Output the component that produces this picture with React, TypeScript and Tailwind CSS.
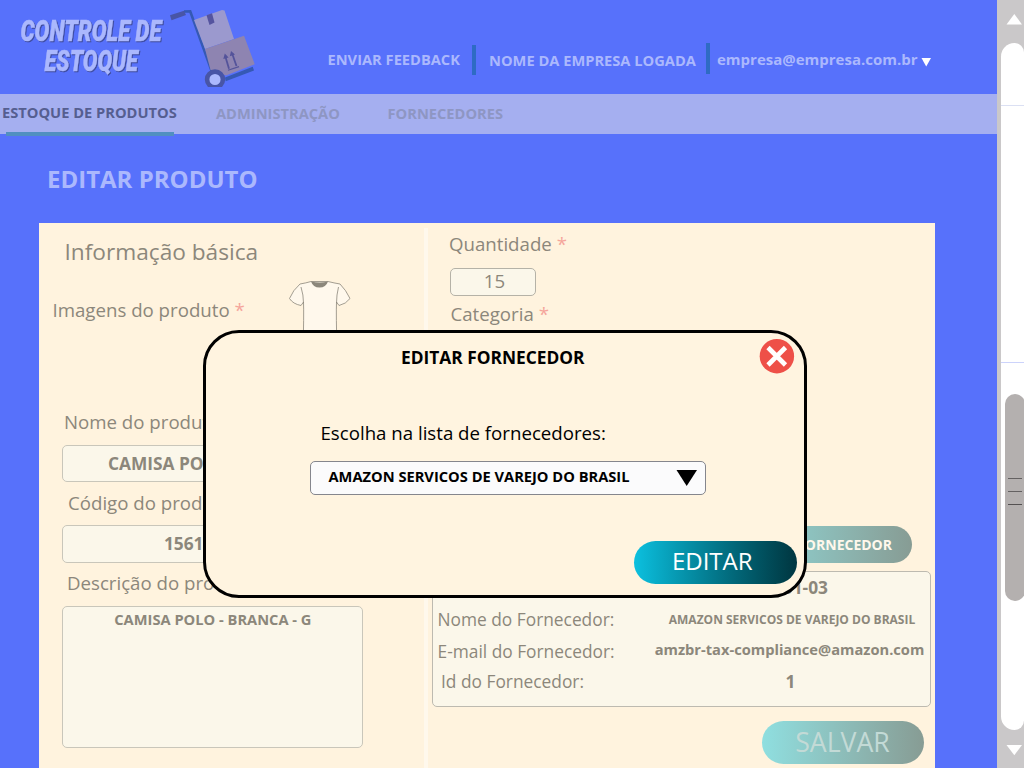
import type { ReactNode } from "react";

function Logo() {
  return (
    <svg width="280" height="94" viewBox="0 0 280 94" className="shrink-0">
      <g
        className="[filter:drop-shadow(1.4px_1.6px_0_#3d4a9c)]"
        fontFamily="Roboto, 'Liberation Sans', sans-serif"
        fontWeight="900"
        fontStyle="italic"
        fontSize="30"
        strokeWidth="0.5"
        fill="#abb8fd"
        stroke="#abb8fd"
      >
        <text x="20.500" y="40.500" textLength="141" lengthAdjust="spacingAndGlyphs">CONTROLE DE</text>
        <text x="44.500" y="71.300" textLength="93.500" lengthAdjust="spacingAndGlyphs">ESTOQUE</text>
      </g>
      <path d="M225 77.500 L252.700 66.700 L254 70.500 L225.700 81.300Z" fill="#3559b4" />
      <path d="M184 11.500 L190.200 11.300 L212 72" fill="none" stroke="#3559b4" strokeWidth="2.600" />
      <path d="M170 15.300 L184 10.700 L186 15 L171.500 20.200Z" fill="#4855a6" />
      <path d="M194 20 L222 10 L224.500 10.500 L234 39 L205 49Z" fill="#9b99ce" />
      <path d="M205 49 L244 35.700 L254.700 64.300 L226 75.500 L210.500 70Z" fill="#8e84b1" />
      <path d="M206.500 15.300 L212 13.300 L214.500 22.500 L209.500 25Z" fill="#55549f" />
      <g stroke="#54539a" strokeWidth="1.8" fill="none">
        <path d="M229 68.800 L225.500 57" />
        <path d="M236.500 66 L232.300 54" />
        <path d="M228 70.300 L239 66.600" strokeWidth="1.200" />
      </g>
      <path d="M223.300 59 L224.800 53.500 L228.600 57.400Z M229.800 56.300 L231 51 L235 54.600Z" fill="#54539a" />
      <circle cx="215" cy="79.500" r="7.900" fill="#abb8fd" stroke="#4855a6" strokeWidth="4.600" />
      <path d="M200 87 H230 V94 H200Z" fill="#5771fb" />
    </svg>
  );
}

function Shirt() {
  return (
    <svg width="64" height="70" viewBox="0 0 64 70">
      <path
        d="M12 4 Q18 3 23 1.500 H40 Q46 3 52 4 Q58 10 62 18.500 Q58 24 51 25.500 L48.500 22 Q48 35 49 70 H15 Q16 35 15.500 22 L13 25.500 Q5 24 1.500 18.500 Q5 10 12 4Z"
        fill="#fff8ec"
        stroke="#8c877b"
        strokeWidth="0.8"
      />
      <path d="M23 1.500 Q32 3.500 40 1.500 Q38 7.500 31.500 7.500 Q25 7.500 23 1.500Z" fill="#8c877b" />
      <path d="M13 7 Q15.500 15 15.500 23 M50.500 7 Q48.500 15 48.500 23" fill="none" stroke="#8c877b" strokeWidth="0.8" />
    </svg>
  );
}

function Label({ children, required, className }: { children: ReactNode; required?: boolean; className: string }) {
  return (
    <div className={"h-6 shrink-0 text-[18.67px] leading-6 " + className}>
      {children}
      {required && <span className="text-[#f5a59b]"> *</span>}
    </div>
  );
}

function Field({ children, className }: { children: ReactNode; className: string }) {
  return (
    <div className={"shrink-0 rounded-[5px] border border-[#c9c6ba] bg-[#fbf7ea] font-bold " + className}>
      {children}
    </div>
  );
}

function Scrollbar() {
  return (
    <aside className="flex w-[27px] shrink-0 flex-col bg-[#cac8c9] pl-1">
      <svg width="23" height="43" className="shrink-0">
        <path d="M5.500 24.500 L13.300 14 L21 24.500Z" fill="#fff" />
      </svg>
      <div className="flex h-[687px] flex-col overflow-hidden rounded-l-[14px] rounded-r-[10px] bg-white">
        <div className="h-[62px] shrink-0" />
        <div className="h-px shrink-0 bg-[#dbe0f3]" />
        <div className="h-[256px] shrink-0" />
        <div className="h-px shrink-0 bg-[#ccd3fb]" />
        <div className="mt-[31px] ml-1 flex h-[207px] w-5 shrink-0 flex-col gap-3 rounded-[10px] bg-[#b4b0af] pt-[84px] pl-[3px]">
          <div className="h-px w-3.5 bg-[#646161]" />
          <div className="h-px w-3.5 bg-[#646161]" />
          <div className="h-px w-3.5 bg-[#545151]" />
        </div>
      </div>
      <svg width="23" height="38" className="shrink-0">
        <path d="M5.500 15 L13.300 25.300 L21 15Z" fill="#fff" />
      </svg>
    </aside>
  );
}

function Modal() {
  return (
    <div
      role="dialog"
      className="absolute top-[330px] left-[203px] flex h-[268px] w-[603.5px] flex-col rounded-[36px] border-3 border-black bg-[#fff4e0] text-black"
    >
      <div className="flex h-[50px] shrink-0">
        <h2 className="mt-3 ml-[195px] w-[358px] text-[17.33px] leading-6 font-bold">EDITAR FORNECEDOR</h2>
        <svg width="36" height="36" className="mt-[5px]">
          <circle cx="17.900" cy="18.200" r="17.200" fill="#ee5048" />
          <path d="M9 9.500 L26.500 27 M26.500 9.500 L9 27" stroke="#fff" strokeWidth="4.600" />
        </svg>
      </div>
      <p className="mt-[38px] ml-[114.5px] h-6 text-[18.67px] leading-6">Escolha na lista de fornecedores:</p>
      <div className="mt-4 ml-[104px] flex h-[34px] w-[396px] shrink-0 items-center rounded-[5px] border border-[#85868d] bg-[#fbfbfc] pl-[17.5px]">
        <span className="w-[347px] pb-[5px] text-[14.67px] leading-5 font-bold">AMAZON SERVICOS DE VAREJO DO BRASIL</span>
        <svg width="22" height="18">
          <path d="M0.500 1 H21 L10.700 17Z" fill="#000" />
        </svg>
      </div>
      <button className="mt-[46px] ml-[428px] h-[43px] w-[162.5px] shrink-0 rounded-full bg-linear-to-r from-[#0cc0df] to-[#003640] pr-[6px] pb-[3px] text-[24px] leading-8 font-normal text-white">
        EDITAR
      </button>
    </div>
  );
}

export default function App() {
  return (
    <div className="relative flex h-[768px] w-[1024px] overflow-hidden bg-[#5771fb] font-['Open_Sans','Noto_Sans',sans-serif] whitespace-nowrap">
      <main className="flex w-[997px] shrink-0 flex-col">
        <header className="flex h-[94px] shrink-0 text-[14.67px] leading-5 font-bold text-[#abb8fd]">
          <Logo />
          <span className="mt-[49px] ml-[47.5px] w-[144.5px]">ENVIAR FEEDBACK</span>
          <div className="mt-[45px] h-[30px] w-1 bg-[#2e6bc4]" />
          <span className="mt-[50px] ml-[13px] w-[217px]">NOME DA EMPRESA LOGADA</span>
          <div className="mt-[43px] h-[31px] w-1 bg-[#2e6bc4]" />
          <span className="mt-[49px] ml-[7px] w-[204px] text-[15px]">empresa@empresa.com.br</span>
          <svg width="10" height="10" className="mt-[57px]">
            <path d="M0.500 1 H10 L5.200 9.500Z" fill="#fff" />
          </svg>
        </header>
        <nav className="flex h-10 shrink-0 bg-[#a5aff0] text-[14.67px] leading-5 font-bold text-[#8e96c3]">
          <div className="flex w-[216px] flex-col pl-0.5 text-[#555e90]">
            <span className="mt-2">ESTOQUE DE PRODUTOS</span>
            <div className="mt-[10px] ml-[3.5px] h-[3.5px] w-[168px] shrink-0 bg-[#518fc1]" />
          </div>
          <span className="mt-[9px] w-[171px]">ADMINISTRAÇÃO</span>
          <span className="mt-[9px] pl-[0.5px]">FORNECEDORES</span>
        </nav>
        <h1 className="mt-[29px] ml-[47px] h-8 shrink-0 text-[24px] leading-8 font-bold text-[#abb8fd]">EDITAR PRODUTO</h1>
        <section className="mt-7 ml-[38.5px] flex h-[545px] w-[896.5px] shrink-0 bg-[#fff3de] text-[#8c877b]">
          <div className="flex w-[385.500px] shrink-0 flex-col">
            <h2 className="mt-[13px] ml-[26px] h-8 text-[22.67px] leading-8">Informação básica</h2>
            <div className="flex h-[120px] shrink-0">
              <Label required className="mt-[30px] ml-[14px] w-[235.500px]">Imagens do produto</Label>
              <div className="mt-3">
                <Shirt />
              </div>
            </div>
            <Label required className="mt-[22px] ml-[25.500px]">Nome do produto</Label>
            <Field className="mt-[11px] ml-[23.900px] h-[37px] w-[301px] pl-[44.5px] text-[17.33px] leading-[34px]">CAMISA POLO BRANCA</Field>
            <Label required className="mt-[9px] ml-[29.500px]">Código do produto</Label>
            <Field className="mt-[10px] ml-[23.900px] h-[38px] w-[301px] pl-[100.5px] text-[17.33px] leading-[35px]">15616516</Field>
            <Label required className="mt-[8px] ml-[28.500px]">Descrição do produto</Label>
            <Field className="mt-[11px] ml-[23.900px] h-[142px] w-[301px] pt-[2px] text-center text-[14.67px] leading-5">CAMISA POLO - BRANCA - G</Field>
          </div>
          <div className="mt-[5px] w-1 bg-[#fff8ec]" />
          <div className="flex flex-1 flex-col">
            <Label required className="mt-[9px] ml-[21px]">Quantidade</Label>
            <div className="mt-3 ml-[22px] h-7 w-[86px] rounded-[5px] border border-[#b5b2a7] bg-[#fbf7ea] pl-[3px] text-center text-[18.67px] leading-[23px]">
              15
            </div>
            <Label required className="mt-1.5 ml-[22.500px]">Categoria</Label>
            <button className="mt-[200px] mr-[23px] h-[37px] w-[180px] shrink-0 self-end rounded-full bg-linear-to-r from-[#8fdfe0] to-[#879c94] pr-5 text-right text-[14px] font-bold text-[#fff8ec]">
              EDITAR FORNECEDOR
            </button>
            <div className="mt-2 ml-[4px] flex h-[136px] w-[499px] shrink-0 rounded-[5px] border border-[#bdbab0] bg-[#fbf7ea]">
              <div className="flex w-[214px] shrink-0 flex-col text-[17.33px] leading-6">
                <span className="mt-[3px] ml-[4.500px] h-6">CNPJ do Fornecedor:</span>
                <span className="mt-2 ml-[4.500px] h-6">Nome do Fornecedor:</span>
                <span className="mt-2 ml-[4.500px] h-6">E-mail do Fornecedor:</span>
                <span className="mt-1.5 ml-2 h-6">Id do Fornecedor:</span>
              </div>
              <div className="flex w-[284px] flex-col items-center leading-6 font-bold">
                <span className="mt-[3px] mr-[102px] h-6 self-end text-[17.33px]">15.436.940/0001-03</span>
                <span className="mt-[9px] ml-[7px] h-6 text-[12px]">AMAZON SERVICOS DE VAREJO DO BRASIL</span>
                <span className="mt-[5px] ml-[2px] h-6 text-[14.67px]">amzbr-tax-compliance@amazon.com</span>
                <span className="mt-2 ml-[4px] h-6 text-[17.33px]">1</span>
              </div>
            </div>
            <button className="mt-[14px] mr-[11px] h-[43px] w-[162px] shrink-0 self-end rounded-full bg-linear-to-r from-[#8fdfe0] to-[#879c94] pr-px pb-[2px] text-[26.67px] leading-[36px] font-normal text-[#c3dad6]">
              SALVAR
            </button>
          </div>
        </section>
      </main>
      <Scrollbar />
      <Modal />
    </div>
  );
}
